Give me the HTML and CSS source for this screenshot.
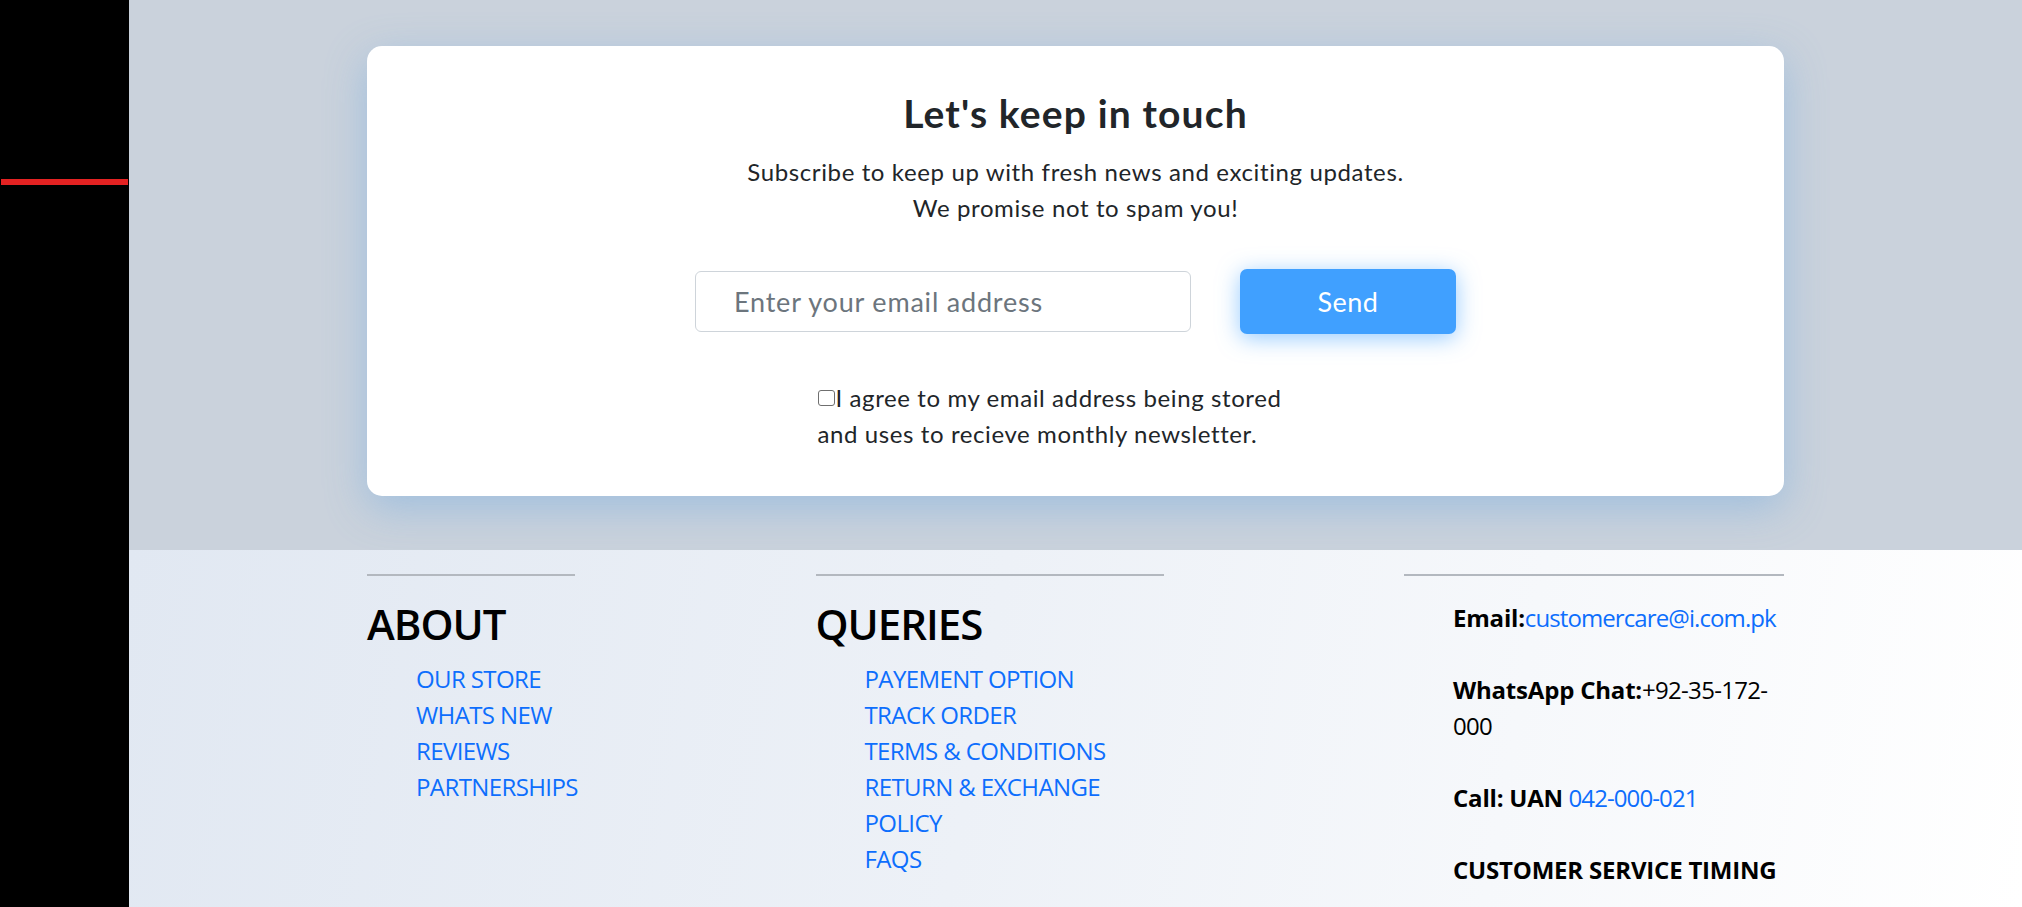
FILE: index.html
```html
<!DOCTYPE html>
<html lang="en">
<head>
<meta charset="utf-8">
<title>Let's keep in touch</title>
<link rel="stylesheet" href="styles.css">
</head>
<body>
<div class="page">
  <aside class="sidebar">
    <div class="sidebar-mark"></div>
  </aside>
  <main class="main">
    <section class="subscribe">
      <div class="card">
        <h2 class="card-title">Let's keep in touch</h2>
        <p class="card-lead">Subscribe to keep up with fresh news and exciting updates.<br>We promise not to spam you!</p>
        <form class="sub-form" onsubmit="return false;">
          <input class="sub-input" type="email" placeholder="Enter your email address">
          <button class="sub-btn" type="submit">Send</button>
        </form>
        <label class="agree"><input type="checkbox" class="agree-box">I agree to my email address being stored<br>and uses to recieve monthly newsletter.</label>
      </div>
    </section>
    <footer class="footer">
      <div class="footer-row">
        <div class="fcol fcol-about">
          <hr class="fdiv">
          <h2 class="fhead">ABOUT</h2>
          <ul class="flinks">
            <li><a href="#">OUR STORE</a></li>
            <li><a href="#">WHATS NEW</a></li>
            <li><a href="#">REVIEWS</a></li>
            <li><a href="#">PARTNERSHIPS</a></li>
          </ul>
        </div>
        <div class="fcol fcol-queries">
          <hr class="fdiv">
          <h2 class="fhead">QUERIES</h2>
          <ul class="flinks">
            <li><a href="#">PAYEMENT OPTION</a></li>
            <li><a href="#">TRACK ORDER</a></li>
            <li><a href="#">TERMS &amp; CONDITIONS</a></li>
            <li><a href="#">RETURN &amp; EXCHANGE</a></li>
            <li><a href="#">POLICY</a></li>
            <li><a href="#">FAQS</a></li>
          </ul>
        </div>
        <div class="fcol fcol-contact">
          <hr class="fdiv">
          <div class="contact">
            <p><b>Email:</b><a href="#">customercare@i.com.pk</a></p>
            <p><b>WhatsApp Chat:</b>+92-35-172-<br>000</p>
            <p><b>Call: UAN</b> <a href="#">042-000-021</a></p>
            <p><b>CUSTOMER SERVICE TIMING</b></p>
          </div>
        </div>
      </div>
    </footer>
  </main>
</div>
</body>
</html>
```

FILE: styles.css
```css
* { box-sizing: border-box; }

html, body {
  margin: 0;
  padding: 0;
  height: 100%;
  overflow: hidden;
}

body {
  font-family: "Lato", "Open Sans", sans-serif;
  color: #212529;
}

.page {
  display: flex;
  min-height: 100vh;
}

.sidebar {
  width: 129px;
  flex: 0 0 129px;
  background: #000;
}

.sidebar-mark {
  margin: 179px 1px 0 1px;
  height: 6px;
  background: #e32222;
}

.main {
  flex: 1;
  display: flex;
  flex-direction: column;
  min-width: 0;
}

/* ---------- subscribe band ---------- */
.subscribe {
  height: 550px;
  background: #cad2dc;
  padding-top: 46px;
}

.card {
  width: 1417px;
  margin: 0 auto;
  background: #fff;
  border-radius: 15px;
  box-shadow: 0 12px 42px rgba(100, 165, 225, 0.42);
  padding: 44px 0 44px;
  text-align: center;
}

.card-title {
  margin: 0;
  font-size: 39px;
  line-height: 46px;
  font-weight: 700;
  letter-spacing: 1.15px;
  color: #212529;
}

.card-lead {
  margin: 18px 0 0;
  font-size: 24px;
  line-height: 36px;
  letter-spacing: 0.62px;
  color: #212529;
}

.sub-form {
  margin: 43px 0 0;
  display: flex;
  justify-content: center;
  align-items: center;
  gap: 49px;
  height: 65px;
}

.sub-input {
  width: 496px;
  height: 61px;
  border: 1px solid #ced4da;
  border-radius: 6px;
  padding: 0 0 0 38px;
  font-family: inherit;
  font-size: 27px;
  letter-spacing: 0.8px;
  color: #212529;
  background: #fff;
  outline: none;
}

.sub-input::placeholder {
  color: #6c757d;
}

.sub-btn {
  width: 216px;
  height: 65px;
  border: 0;
  border-radius: 7px;
  background: #40a0ff;
  color: #fff;
  font-family: inherit;
  font-size: 27px;
  letter-spacing: 0.5px;
  box-shadow: 0 4px 22px rgba(64, 160, 255, 0.55);
  cursor: pointer;
}

.agree {
  display: block;
  width: 516px;
  margin: 46px auto 0;
  text-align: left;
  font-size: 24px;
  line-height: 36px;
  letter-spacing: 0.6px;
  color: #212529;
}

.agree-box {
  -webkit-appearance: none;
  appearance: none;
  display: inline-block;
  width: 17px;
  height: 16px;
  margin: 0 1px 0 0;
  border: 1.5px solid #6f6f6f;
  border-radius: 3px;
  background: #fff;
  vertical-align: 1px;
}

/* ---------- footer ---------- */
.footer {
  flex: 1;
  background: linear-gradient(100deg, #e1e8f2 0%, #edf1f7 45%, #ffffff 100%);
  font-family: "Open Sans", "Noto Sans", sans-serif;
  color: #000;
}

.footer-row {
  width: 1417px;
  margin: 0 auto;
  display: flex;
  justify-content: space-between;
}

.fcol-about { width: 208px; }
.fcol-queries { width: 348px; }
.fcol-contact { width: 380px; }

.fdiv {
  margin: 24px 0 0;
  border: 0;
  height: 2px;
  background: #b3b8bf;
}

.fhead {
  margin: 22px 0 0;
  font-size: 42px;
  line-height: 52px;
  font-weight: 600;
  letter-spacing: -1px;
  color: #000;
}

.flinks {
  list-style: none;
  margin: 11px 0 0;
  padding: 0 0 0 49px;
}

.flinks li {
  font-size: 24px;
  line-height: 36px;
  letter-spacing: -0.6px;
}

.flinks a,
.contact a {
  color: #0d6efd;
  text-decoration: none;
}

.contact {
  padding: 24px 0 0 49px;
}

.contact p {
  margin: 0 0 36px;
  font-size: 24px;
  line-height: 36px;
  letter-spacing: -0.7px;
}

.contact p a {
  letter-spacing: -0.9px;
}

.contact p:last-child {
  margin-bottom: 0;
}

.contact b {
  font-weight: 700;
  letter-spacing: -0.2px;
}
```
